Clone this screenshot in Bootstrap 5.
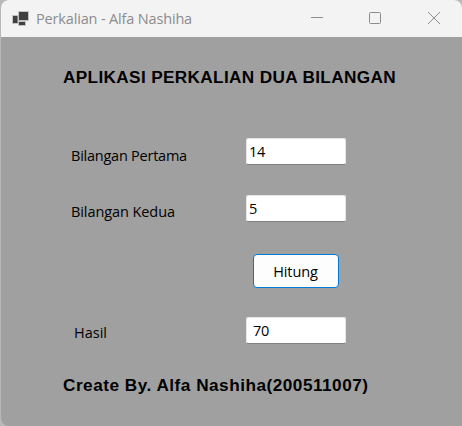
<!DOCTYPE html>
<html lang="id">
<head>
<meta charset="utf-8">
<title>Perkalian - Alfa Nashiha</title>
<link href="https://cdn.jsdelivr.net/npm/bootstrap@5.3.0/dist/css/bootstrap.min.css" rel="stylesheet">
<style>
body{height:426px;background:#b9b9b9;font-family:"Open Sans","Noto Sans",sans-serif;overflow:hidden}
.app-window{width:461px;height:426px;margin-left:1px;background:#a0a0a0;border-radius:8px 8px 0 8px;color:#000}
.title-bar{height:37px;background:#f3f3f3;color:#8c8c8c;padding-left:11px;font-size:14.5px}
.title-bar .caption-text{margin-left:7px;letter-spacing:-.16px;line-height:20px}
.heading-text{font-family:"Liberation Sans",Arial,sans-serif;font-size:17.2px;font-weight:700;line-height:20px;padding-left:62px;white-space:nowrap;letter-spacing:.5px}
.heading-top{padding-top:30px;letter-spacing:.35px}
.field-row{height:27px;font-size:14.5px;letter-spacing:-.24px}
.field-row label{width:175px;margin-left:70px;line-height:20px;padding-top:8px}
.field-row .label-second{padding-top:7px;letter-spacing:-.08px}
.field-row .label-result{width:172px;margin-left:73px;padding-top:6px;letter-spacing:0}
.field-row .form-control{width:100px;height:27px;min-height:0;padding:0 2px 1px;border:1px solid #e6e6e6;border-bottom-color:#808080;border-radius:2px;font-size:14.5px;line-height:20px;color:#000;letter-spacing:-.2px}
.field-row .result-box{padding-left:6px}
.btn-count{width:86px;height:34px;margin:32px 0 0 252px;padding:2px 1px 0 0;background:#fdfdfd;border:1px solid #0078d4;border-radius:4px;font-size:14.5px;letter-spacing:-.1px;color:#000}
</style>
<script src="https://cdn.jsdelivr.net/npm/bootstrap@5.3.0/dist/js/bootstrap.bundle.min.js"></script>
</head>
<body>
<main class="app-window overflow-hidden">
  <header class="title-bar d-flex align-items-center">
    <svg width="17" height="16" viewBox="0 0 17 16"><path fill="#c4c4c4" d="M0 4h6V0h11v10h-3v5H6v-2H0z"/><path fill="#404040" d="M1 5h4.500v7H1zM7 1h9v8H7zM7 11h6v3H7z"/></svg>
    <span class="caption-text">Perkalian - Alfa Nashiha</span>
    <svg class="ms-auto" width="152" height="37" viewBox="0 0 152 37" fill="none" stroke="#8c8c8c"><path d="M1 17.5h12"/><rect x="59.5" y="12.5" width="11" height="11" rx="1"/><path d="M118 12l12 12m0-12L118 24"/></svg>
  </header>
  <h1 class="heading-text heading-top m-0">APLIKASI PERKALIAN DUA BILANGAN</h1>
  <form>
    <div class="field-row d-flex" style="margin-top:51px"><label for="a">Bilangan Pertama</label><input id="a" class="form-control" value="14"></div>
    <div class="field-row d-flex" style="margin-top:30px"><label class="label-second" for="b">Bilangan Kedua</label><input id="b" class="form-control" value="5"></div>
    <button type="button" class="btn btn-count d-block">Hitung</button>
    <div class="field-row d-flex" style="margin-top:29px"><label class="label-result" for="r">Hasil</label><input id="r" class="form-control result-box" value="70"></div>
  </form>
  <footer class="heading-text" style="margin-top:31px">Create By. Alfa Nashiha(200511007)</footer>
</main>
</body>
</html>
